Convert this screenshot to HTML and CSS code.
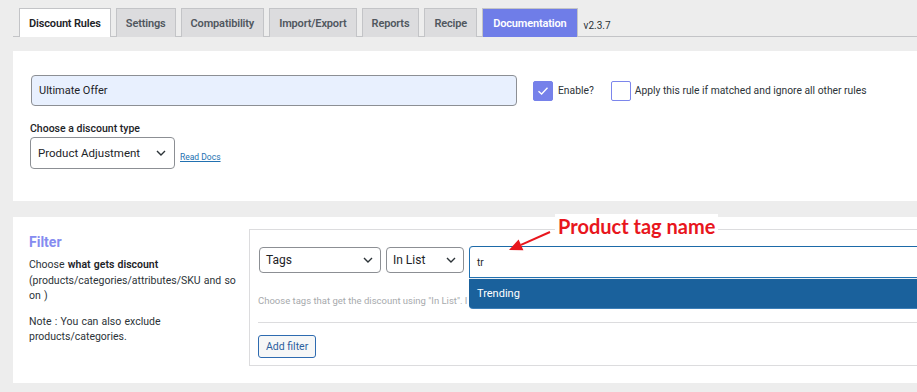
FILE: index.html
```html
<!DOCTYPE html>
<html lang="en">
<head>
    <meta charset="UTF-8">
    <meta name="viewport" content="width=device-width, initial-scale=1.0">
    <title>Discount Rules</title>
    <link rel="stylesheet" href="styles.css">
</head>
<body>
    <div class="page">
        <!-- Tabs -->
        <nav class="tabs">
            <a href="#" class="tab active">Discount Rules</a>
            <a href="#" class="tab">Settings</a>
            <a href="#" class="tab">Compatibility</a>
            <a href="#" class="tab">Import/Export</a>
            <a href="#" class="tab">Reports</a>
            <a href="#" class="tab">Recipe</a>
            <a href="#" class="tab doc">Documentation</a>
            <span class="version">v2.3.7</span>
        </nav>

        <!-- Rule title + discount type -->
        <section class="panel rule-panel">
            <div class="title-row">
                <input type="text" class="rule-title" value="Ultimate Offer">
                <span class="checkbox checked">
                    <svg width="12" height="10" viewBox="0 0 12 10"><path d="M1.5 5.2 L4.6 8 L10.5 1.8" fill="none" stroke="#fff" stroke-width="1.3"/></svg>
                </span>
                <span class="check-label">Enable?</span>
                <span class="checkbox"></span>
                <span class="check-label">Apply this rule if matched and ignore all other rules</span>
            </div>

            <label class="type-label">Choose a discount type</label>
            <div class="type-row">
                <div class="select type-select">
                    <span>Product Adjustment</span>
                    <svg class="chev" width="10" height="6" viewBox="0 0 10 6"><path d="M1 1 L5 5 L9 1" fill="none" stroke="#2c3338" stroke-width="1.4"/></svg>
                </div>
                <a href="#" class="read-docs">Read Docs</a>
            </div>
        </section>

        <!-- Filter -->
        <section class="panel filter-panel">
            <div class="filter-info">
                <h3 class="filter-title">Filter</h3>
                <p>Choose <b>what gets discount</b> (products/categories/attributes/SKU and so on )</p>
                <p>Note : You can also exclude products/categories.</p>
            </div>

            <div class="filter-box">
                <div class="filter-row">
                    <div class="select tags-select">
                        <span>Tags</span>
                        <svg class="chev" width="10" height="6" viewBox="0 0 10 6"><path d="M1 1 L5 5 L9 1" fill="none" stroke="#2c3338" stroke-width="1.4"/></svg>
                    </div>
                    <div class="select list-select">
                        <span>In List</span>
                        <svg class="chev" width="10" height="6" viewBox="0 0 10 6"><path d="M1 1 L5 5 L9 1" fill="none" stroke="#2c3338" stroke-width="1.4"/></svg>
                    </div>
                    <div class="search">
                        <span class="search-text">tr</span>
                        <div class="search-result">Trending</div>
                    </div>
                </div>
                <p class="helper">Choose tags that get the discount using "In List". I</p>
                <hr class="divider">
                <button class="add-filter">Add filter</button>
            </div>

            <!-- Annotation -->
            <span class="note-label">Product tag name</span>
            <svg class="note-arrow" width="60" height="30" viewBox="0 0 60 30">
                <path d="M47 5 L18 17.8" stroke="#e8161d" stroke-width="2" fill="none"/>
                <path d="M6 23 L15.6 12.6 L20.4 23.2 Z" fill="#e8161d"/>
            </svg>
        </section>
    </div>
</body>
</html>
```

FILE: styles.css
```css
* {
    margin: 0;
    padding: 0;
    box-sizing: border-box;
    font-family: Roboto, 'Noto Sans', sans-serif;
}

body {
    background: #ededed;
    overflow: hidden;
    color: #1d2327;
}

.page {
    width: 1100px;
    padding-left: 13px;
}

/* Tabs */
.tabs {
    display: flex;
    align-items: flex-end;
    padding: 8px 0 0 6px;
    height: 37px;
    border-bottom: 1px solid #c3c4c7;
}

.tab {
    display: flex;
    align-items: center;
    height: 29px;
    margin-right: 5px;
    margin-bottom: -1px;
    padding: 0 9px;
    background: #dcdcde;
    border: 1px solid #c3c4c7;
    border-bottom: none;
    color: #50575e;
    font-size: 11px;
    font-weight: 600;
    letter-spacing: -0.15px;
    text-decoration: none;
}

.tab.active {
    background: #fff;
    color: #1d2327;
}

.tab.doc {
    background: #6f7de8;
    color: #fff;
    padding: 0 10px;
}

.version {
    margin-left: 1px;
    font-size: 10px;
    color: #2c3338;
    padding-bottom: 5px;
}

/* Panels */
.panel {
    background: #fff;
}

.rule-panel {
    margin-top: 14px;
    padding: 24px 17px 32px 17px;
    height: 150px;
}

.title-row {
    display: flex;
    align-items: center;
}

.rule-title {
    width: 486px;
    height: 31px;
    margin-left: 1px;
    padding: 0 7px;
    background: #e8f0fe;
    border: 1px solid #8c8f94;
    border-radius: 4px;
    font-size: 11px;
    color: #1d2327;
    outline: none;
}

.checkbox {
    display: flex;
    align-items: center;
    justify-content: center;
    width: 20px;
    height: 20px;
    margin-left: 16px;
    border: 1px solid #7c86ec;
    border-radius: 2px;
    background: #fff;
}

.checkbox.checked {
    background: #7681ea;
    border-color: #7681ea;
}

.check-label {
    margin-left: 5px;
    font-size: 10.3px;
    color: #2c3338;
}

.checkbox:not(.checked) {
    margin-left: 17px;
}

.checkbox:not(.checked) + .check-label {
    margin-left: 4px;
}

.type-label {
    display: block;
    margin-top: 15px;
    font-size: 10.5px;
    font-weight: 500;
    line-height: 16px;
    color: #1d2327;
}

.type-row {
    display: flex;
    align-items: flex-end;
}

.select {
    display: flex;
    align-items: center;
    justify-content: space-between;
    border: 1px solid #8c8f94;
    border-radius: 4px;
    background: #fff;
    font-size: 12px;
    color: #1d2327;
}

.type-select {
    width: 145px;
    height: 32px;
    padding: 0 8px 0 7px;
    font-size: 11.5px;
}

.read-docs {
    margin: 0 0 7px 5px;
    font-size: 8.5px;
    color: #2271b1;
}

/* Filter panel */
.filter-panel {
    position: relative;
    display: flex;
    margin-top: 16px;
    height: 166px;
}

.filter-info {
    flex: 0 0 236px;
    padding: 16px 10px 0 16px;
    font-size: 10.5px;
    line-height: 15.5px;
    word-spacing: 0.6px;
    color: #2c3338;
}

.filter-title {
    font-size: 14px;
    font-weight: 700;
    line-height: 18px;
    color: #858cf0;
    margin-bottom: 6px;
    word-spacing: 0;
}

.filter-info p {
    margin-bottom: 10px;
}

.filter-info b {
    font-weight: 600;
    color: #1d2327;
}

.filter-box {
    flex: 1;
    margin: 12px 0 17px 0;
    padding: 16px 0 8px 8px;
    border: 1px solid #dcdcde;
}

.filter-row {
    display: flex;
    align-items: flex-start;
}

.tags-select {
    width: 122px;
    height: 26px;
    margin: 1px 0 0 1px;
    padding: 0 7px 0 6px;
}

.list-select {
    width: 78px;
    height: 26px;
    margin: 1px 0 0 5px;
    padding: 0 7px 0 6px;
}

.search {
    position: relative;
    flex: 1;
    height: 32px;
    margin-left: 5px;
    padding: 0 7px;
    display: flex;
    align-items: center;
    border: 1px solid #2271b1;
    border-top-color: #1d6aa8;
    border-radius: 4px 0 0 0;
    background: #fff;
}

.search-text {
    font-size: 10px;
    color: #1d2327;
}

.search-result {
    position: absolute;
    top: 31px;
    left: -1px;
    right: -1px;
    height: 30px;
    padding: 0 8px;
    display: flex;
    align-items: center;
    background: #1a619c;
    border-radius: 0 0 0 4px;
    border-top: 1px solid #e8eef4;
    font-size: 11px;
    color: #fff;
    box-shadow: 0 1px 0 #3d7fb8;
}

.helper {
    margin-top: 17px;
    font-size: 9.5px;
    line-height: 12px;
    color: #a7aaad;
    white-space: nowrap;
}

.divider {
    margin-top: 15px;
    border: none;
    border-top: 1px solid #dcdcde;
}

.add-filter {
    margin-top: 12px;
    height: 23px;
    padding: 0 7px;
    background: #f6f7f7;
    border: 1px solid #2e6bb0;
    border-radius: 3px;
    font-size: 10.5px;
    color: #2c5f9e;
}

/* Annotation */
.note-label {
    position: absolute;
    top: -3px;
    left: 542px;
    padding: 0 3px;
    background: #fff;
    font-family: Lato, 'Liberation Sans', sans-serif;
    font-size: 20px;
    font-weight: 700;
    line-height: 24px;
    color: #e8161d;
}

.note-arrow {
    position: absolute;
    top: 10px;
    left: 490px;
}
```
